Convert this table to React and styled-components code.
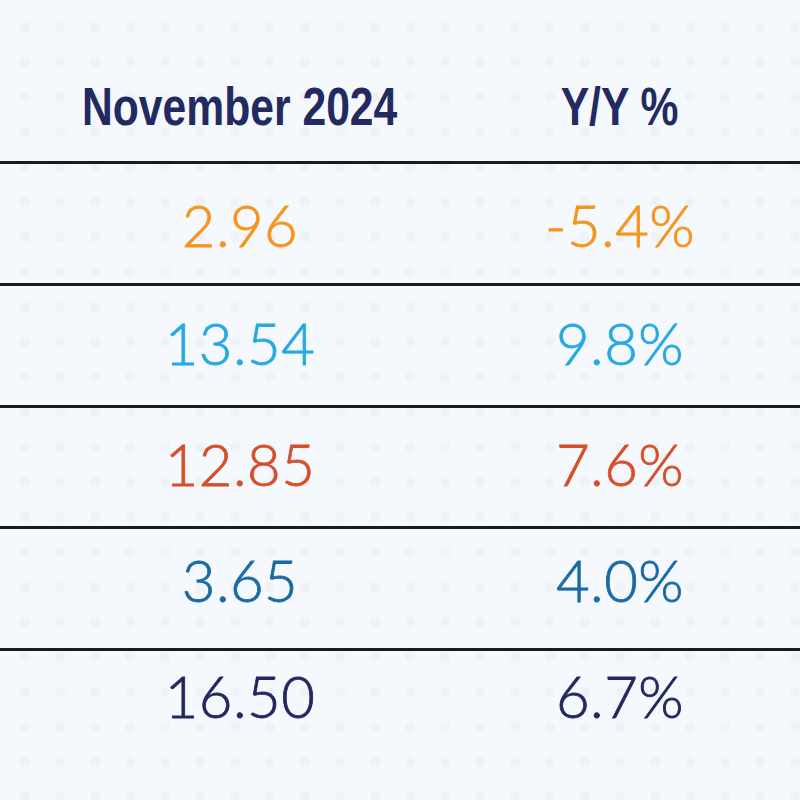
import React from "react";
import styled, { createGlobalStyle } from "styled-components";

const rows = [
  { value: "2.96", change: "-5.4%", color: "#f7941d", nudge: 0 },
  { value: "13.54", change: "9.8%", color: "#27a9e1", nudge: -4 },
  { value: "12.85", change: "7.6%", color: "#d4502a", nudge: -5 },
  { value: "3.65", change: "4.0%", color: "#1a6aa6", nudge: -10 },
  { value: "16.50", change: "6.7%", color: "#22285f", nudge: -16 },
];

const GlobalStyle = createGlobalStyle`
  html, body {
    margin: 0;
    padding: 0;
    background: #f5f9fd;
  }
`;

const Page = styled.div`
  width: 800px;
  height: 800px;
  overflow: hidden;
  background-color: #f5f9fd;
  background-image: radial-gradient(circle, #eef1f6 0 3.5px, rgba(238, 241, 246, 0) 6.5px);
  background-size: 35px 35px;
  background-position: 7.5px 9.5px;
`;

const Header = styled.div`
  height: 161px;
  display: grid;
  grid-template-columns: 480px 280px;
  align-items: start;
  padding-top: 79px;
  box-sizing: border-box;
`;

const HeadCell = styled.div`
  text-align: center;
  font-family: "Liberation Sans", Arial, sans-serif;
  font-weight: 700;
  font-size: 54px;
  line-height: 1;
  color: #222a61;

  span {
    display: inline-block;
    transform: scaleX(0.79);
  }
`;

const Row = styled.div`
  height: 121.75px;
  box-sizing: border-box;
  border-top: 3px solid #1b1b1b;
  display: grid;
  grid-template-columns: 480px 280px;
  align-items: start;
  padding-top: ${(p) => 32 + p.$nudge}px;
  color: ${(p) => p.$color};
`;

const Cell = styled.div`
  text-align: center;
  font-family: Lato, "Open Sans", sans-serif;
  font-weight: 300;
  font-size: 58px;
  line-height: 58px;
  letter-spacing: 0.5px;
  -webkit-text-stroke: 0.8px currentColor;
`;

export default function App() {
  return (
    <Page>
      <GlobalStyle />
      <Header>
        <HeadCell>
          <span>November 2024</span>
        </HeadCell>
        <HeadCell>
          <span>Y/Y %</span>
        </HeadCell>
      </Header>
      {rows.map((r) => (
        <Row key={r.value} $color={r.color} $nudge={r.nudge}>
          <Cell>{r.value}</Cell>
          <Cell>{r.change}</Cell>
        </Row>
      ))}
    </Page>
  );
}
